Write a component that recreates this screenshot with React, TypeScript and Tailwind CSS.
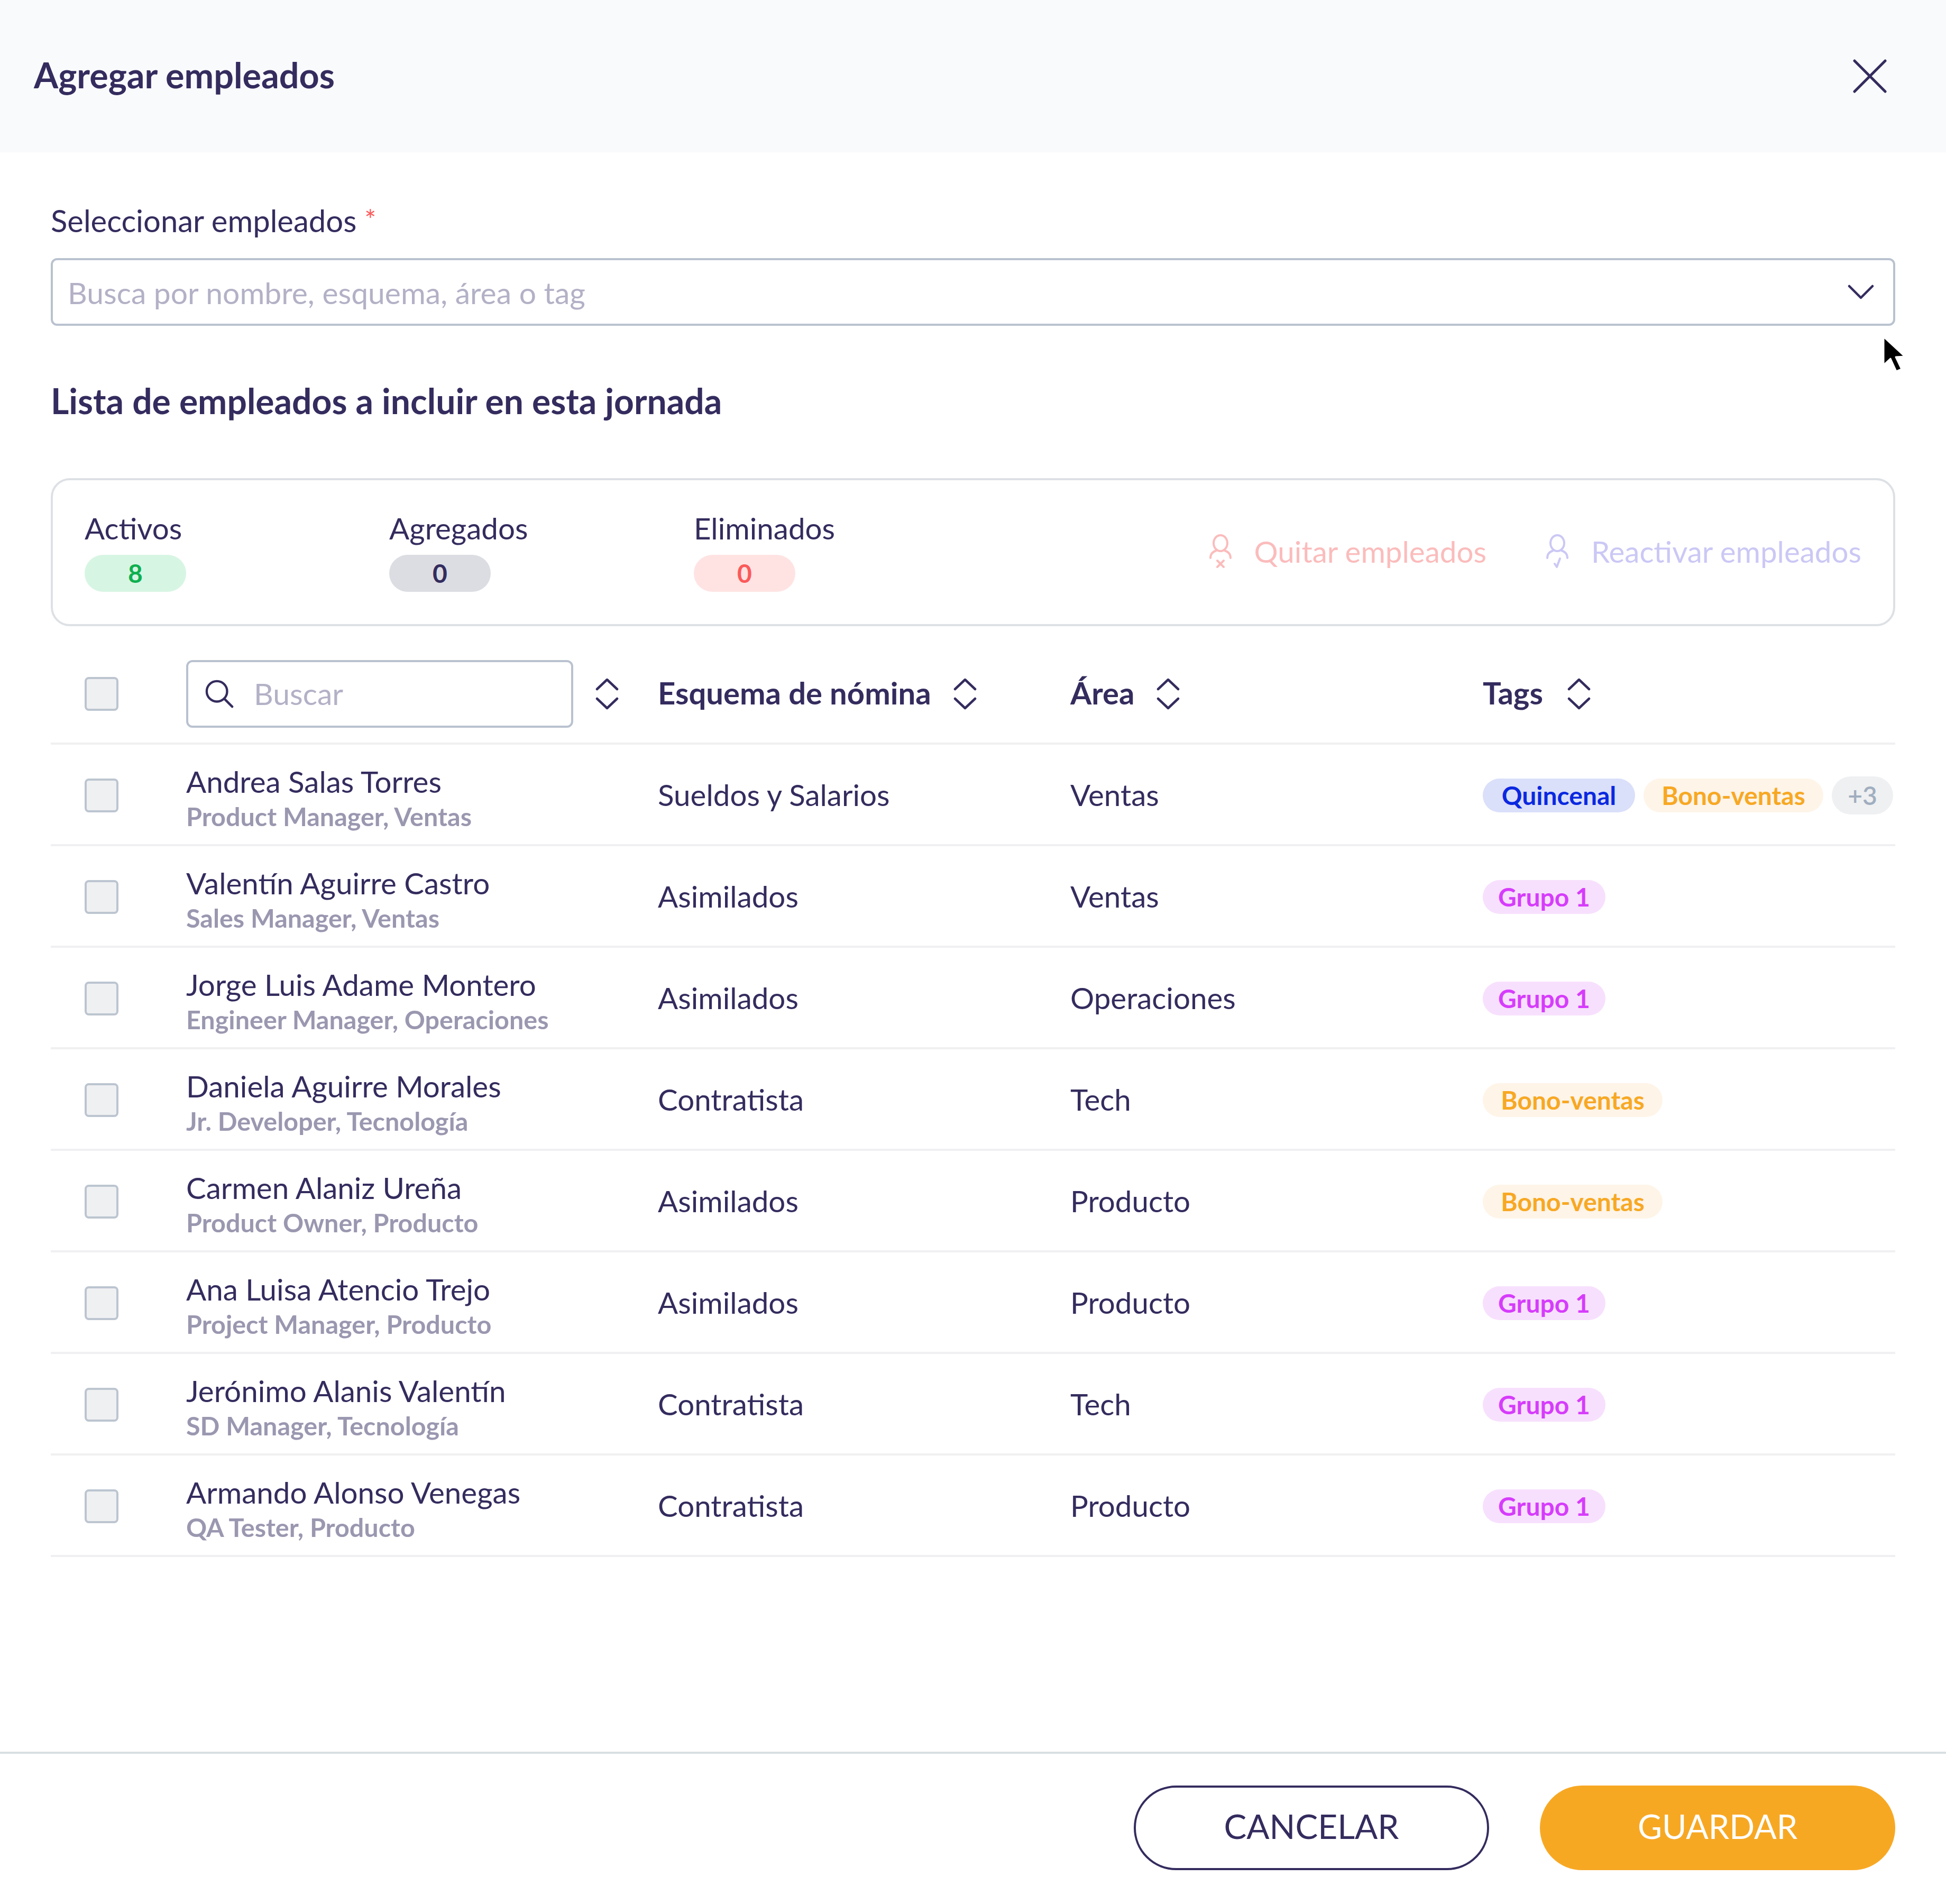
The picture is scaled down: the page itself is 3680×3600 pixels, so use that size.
import React from 'react';

type Tag = { label: string; cls: string };

const quincenal: Tag = { label: 'Quincenal', cls: 'w-[288px] bg-[#dadffa] text-[#0a28e0]' };
const bono: Tag = { label: 'Bono-ventas', cls: 'w-[340px] bg-[#fef4e8] text-[#f7a823]' };
const grupo: Tag = { label: 'Grupo 1', cls: 'w-[232px] bg-[#f7e0fd] text-[#d63cfb]' };

const rows = [
  { name: 'Andrea Salas Torres', role: 'Product Manager, Ventas', scheme: 'Sueldos y Salarios', area: 'Ventas', tags: [quincenal, bono], more: '+3' },
  { name: 'Valentín Aguirre Castro', role: 'Sales Manager, Ventas', scheme: 'Asimilados', area: 'Ventas', tags: [grupo] },
  { name: 'Jorge Luis Adame Montero', role: 'Engineer Manager, Operaciones', scheme: 'Asimilados', area: 'Operaciones', tags: [grupo] },
  { name: 'Daniela Aguirre Morales', role: 'Jr. Developer, Tecnología', scheme: 'Contratista', area: 'Tech', tags: [bono] },
  { name: 'Carmen Alaniz Ureña', role: 'Product Owner, Producto', scheme: 'Asimilados', area: 'Producto', tags: [bono] },
  { name: 'Ana Luisa Atencio Trejo', role: 'Project Manager, Producto', scheme: 'Asimilados', area: 'Producto', tags: [grupo] },
  { name: 'Jerónimo Alanis Valentín', role: 'SD Manager, Tecnología', scheme: 'Contratista', area: 'Tech', tags: [grupo] },
  { name: 'Armando Alonso Venegas', role: 'QA Tester, Producto', scheme: 'Contratista', area: 'Producto', tags: [grupo] },
];

const Checkbox = () => (
  <div className="w-[64px] h-[64px] rounded-[8px] border-[4px] border-[#bcc5d0] bg-[#eff0f2]" />
);

const SortIcon = () => (
  <svg width="44" height="60" viewBox="0 0 44 60" fill="none" stroke="#342c5e" strokeWidth="4.5" strokeLinecap="round" strokeLinejoin="round" className="shrink-0">
    <path d="M3 21 L22 3 L41 21" />
    <path d="M3 39 L22 57 L41 39" />
  </svg>
);

const PersonIcon = ({ color, mark }: { color: string; mark: 'x' | 'check' }) => (
  <svg width="44" height="64" viewBox="0 0 44 64" fill="none" stroke={color} strokeWidth="4" strokeLinecap="round" strokeLinejoin="round" className="shrink-0">
    <ellipse cx="22" cy="17" rx="13" ry="15" />
    <path d="M3 45 C3 37 8 33 14 31" />
    <path d="M41 45 C41 37 36 33 30 31" />
    {mark === 'x' ? (
      <path d="M16 50 L28 62 M28 50 L16 62" />
    ) : (
      <path d="M17 56 L21 62 L27 46" />
    )}
  </svg>
);

const Stat = ({ label, value, cls }: { label: string; value: string; cls: string }) => (
  <div className="w-[576px] flex flex-col">
    <div className="h-[64px] leading-[64px] text-[56.5px]">{label}</div>
    <div className={`mt-[19px] w-[192px] h-[70px] rounded-full flex items-center justify-center text-[48px] font-bold ${cls}`}>{value}</div>
  </div>
);

const TagPill = ({ tag }: { tag: Tag }) => (
  <span className={`h-[64px] rounded-full flex items-center justify-center text-[48px] font-bold whitespace-nowrap ${tag.cls}`}>{tag.label}</span>
);

export default function App() {
  return (
    <div className="relative w-[3680px] h-[3600px] bg-white flex flex-col font-['Lato',sans-serif] text-[#342c5e]">
      {/* Header */}
      <div className="h-[288px] shrink-0 bg-[#f9fafc] pl-[64px] pr-[112px] flex items-center justify-between">
        <h1 className="pb-[4px] text-[66.5px] font-bold">Agregar empleados</h1>
        <svg width="64" height="64" viewBox="0 0 64 64" fill="none" stroke="#342c5e" strokeWidth="5" strokeLinecap="round">
          <path d="M3 3 L61 61 M61 3 L3 61" />
        </svg>
      </div>

      <div className="flex-1 px-[96px] pt-[95px]">
        <div className="h-[64px] leading-[64px] text-[58px]">
          Seleccionar empleados <span className="text-[#fb5a5a] text-[52px] align-[4px]">*</span>
        </div>
        <div className="mt-[41px] h-[128px] rounded-[12px] border-[4px] border-[#b9c2cf] pl-[28px] pr-[36px] flex items-center justify-between">
          <span className="pt-[4px] text-[57px] text-[#b3b1c6]">Busca por nombre, esquema, área o tag</span>
          <svg width="50" height="28" viewBox="0 0 50 28" fill="none" stroke="#342c5e" strokeWidth="4.5" strokeLinecap="round" strokeLinejoin="round">
            <path d="M3 3 L25 25 L47 3" />
          </svg>
        </div>

        <h2 className="mt-[106px] h-[72px] leading-[72px] text-[66px] font-bold">Lista de empleados a incluir en esta jornada</h2>

        {/* Summary */}
        <div className="mt-[110px] h-[280px] rounded-[36px] border-[4px] border-[#dde1e5] pl-[60px] pr-[60px] pt-[58px] flex">
          <Stat label="Activos" value="8" cls="bg-[#d7f5e3] text-[#0eb050]" />
          <Stat label="Agregados" value="0" cls="bg-[#dcdde3] text-[#342c5e]" />
          <Stat label="Eliminados" value="0" cls="bg-[#ffe3e3] text-[#fb5a5a]" />
          <div className="ml-auto mt-[6px] h-[140px] flex items-center text-[56.5px]">
            <PersonIcon color="#fbbcbc" mark="x" />
            <span className="ml-[42px] text-[#fbbcbc]">Quitar empleados</span>
            <div className="ml-[112px]"><PersonIcon color="#cbc8f5" mark="check" /></div>
            <span className="ml-[42px] text-[#cbc8f5]">Reactivar empleados</span>
          </div>
        </div>

        {/* Table header */}
        <div className="mt-[64px] pb-[28px] border-b-[4px] border-[#f0f0f2] pl-[64px] grid grid-cols-[192px_892px_780px_780px_1fr] items-center text-[58px] font-bold">
          <Checkbox />
          <div className="flex items-center">
            <div className="w-[732px] h-[128px] rounded-[12px] border-[4px] border-[#b9c2cf] pl-[32px] flex items-center">
              <svg width="54" height="54" viewBox="0 0 56 56" fill="none" stroke="#342c5e" strokeWidth="4.5" strokeLinecap="round" className="shrink-0">
                <circle cx="23" cy="23" r="20" />
                <path d="M38 38 L53 53" />
              </svg>
              <span className="ml-[38px] text-[57px] font-normal text-[#b3b1c6]">Buscar</span>
            </div>
            <div className="ml-[42px]"><SortIcon /></div>
          </div>
          <div className="flex items-center gap-[42px]"><span className="-mt-[6px]">Esquema de nómina</span> <SortIcon /></div>
          <div className="flex items-center gap-[42px]"><span className="-mt-[6px]">Área</span> <SortIcon /></div>
          <div className="flex items-center gap-[46px]"><span className="-mt-[6px]">Tags</span> <SortIcon /></div>
        </div>

        {/* Rows */}
        {rows.map(row => (
          <div key={row.name} className="h-[192px] pt-[4px] border-b-[4px] border-[#f0f0f2] pl-[64px] grid grid-cols-[192px_892px_780px_780px_1fr] items-center text-[56.5px]">
            <Checkbox />
            <div className="pt-[12px]">
              <div className="leading-[66px]">{row.name}</div>
              <div className="leading-[66px] text-[48.5px] font-bold text-[#9a97b0]">{row.role}</div>
            </div>
            <div className="pb-[4px]">{row.scheme}</div>
            <div className="pb-[4px]">{row.area}</div>
            <div className="flex items-center gap-[16px]">
              {row.tags.map(t => <TagPill key={t.label} tag={t} />)}
              {row.more && (
                <span className="h-[72px] w-[116px] rounded-full bg-[#eff0f2] text-[#a0aebf] flex items-center justify-center text-[48px] font-semibold">{row.more}</span>
              )}
            </div>
          </div>
        ))}
      </div>

      {/* Footer */}
      <div className="h-[288px] shrink-0 border-t-[4px] border-[#d9dfe3] pr-[96px] pt-[60px] flex justify-end gap-[96px]">
        <button className="w-[672px] h-[160px] pb-[6px] rounded-full border-[4px] border-[#342c5e] text-[64px] text-[#342c5e]">CANCELAR</button>
        <button className="w-[672px] h-[160px] pb-[6px] rounded-full bg-[#f7a823] text-[63px] text-white">GUARDAR</button>
      </div>

      {/* Mouse cursor */}
      <svg width="48" height="76" viewBox="0 0 48 72" className="absolute left-[3558px] top-[632px]">
        <path d="M4 3 L4 56 L17 44 L28 68 L38 64 L27 41 L44 40 Z" fill="#000" stroke="#fff" strokeWidth="3" strokeLinejoin="round" />
      </svg>
    </div>
  );
}
